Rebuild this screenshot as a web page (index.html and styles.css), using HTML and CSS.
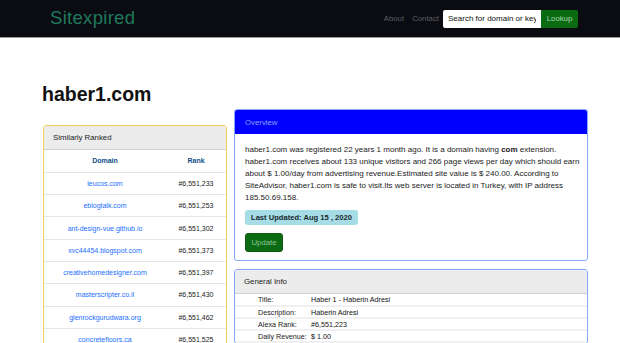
FILE: index.html
```html
<!DOCTYPE html>
<html>
<head>
<meta charset="utf-8">
<link rel="stylesheet" href="styles.css">
</head>
<body>
<nav class="navbar">
  <div class="brand">Sitexpired</div>
  <div class="nav-right">
    <a class="nav-link">About</a>
    <a class="nav-link">Contact</a>
    <form class="search">
      <input class="search-input" type="text" placeholder="Search for domain or keyword">
      <button class="lookup" type="button">Lookup</button>
    </form>
  </div>
</nav>
<main class="container">
  <h1 class="title">haber1.com</h1>
  <div class="row">
    <div class="col-left">
      <div class="card card-yellow">
        <div class="card-header gray">Similarly Ranked</div>
        <table class="rank-table">
          <thead><tr><th>Domain</th><th>Rank</th></tr></thead>
          <tbody>
            <tr><td><a>leucos.com</a></td><td>#6,551,233</td></tr>
            <tr><td><a>eblogtalk.com</a></td><td>#6,551,253</td></tr>
            <tr><td><a>ant-design-vue.github.io</a></td><td>#6,551,302</td></tr>
            <tr><td><a>xvc44454.blogspot.com</a></td><td>#6,551,373</td></tr>
            <tr><td><a>creativehomedesigner.com</a></td><td>#6,551,397</td></tr>
            <tr><td><a>masterscripter.co.il</a></td><td>#6,551,430</td></tr>
            <tr><td><a>glenrockgurudwara.org</a></td><td>#6,551,462</td></tr>
            <tr><td><a>concretefloors.ca</a></td><td>#6,551,525</td></tr>
          </tbody>
        </table>
      </div>
    </div>
    <div class="col-right">
      <div class="card card-blue">
        <div class="card-header blue">Overview</div>
        <div class="card-body">
          <p class="overview">haber1.com was registered 22 years 1 month ago. It is a domain having <b>com</b> extension. haber1.com receives about 133 unique visitors and 266 page views per day which should earn about $ 1.00/day from advertising revenue.Estimated site value is $ 240.00. According to SiteAdvisor, haber1.com is safe to visit.Its web server is located in Turkey, with IP address 185.50.69.158.</p>
          <div><span class="badge">Last Updated: Aug 15 , 2020</span></div>
          <button class="update" type="button">Update</button>
        </div>
      </div>
      <div class="card card-blue info-card">
        <div class="card-header gray">General Info</div>
        <table class="info-table">
          <tr><td class="lbl">Title:</td><td class="val">Haber 1 - Haberin Adresi</td></tr>
          <tr><td class="lbl">Description:</td><td class="val">Haberin Adresi</td></tr>
          <tr class="sep"><td class="lbl">Alexa Rank:</td><td class="val">#6,551,223</td></tr>
          <tr><td class="lbl">Daily Revenue:</td><td class="val">$ 1.00</td></tr>
        </table>
      </div>
    </div>
  </div>
</main>
</body>
</html>
```

FILE: styles.css
```css
* { box-sizing: border-box; }
html, body { margin: 0; padding: 0; }
body {
  font-family: "Liberation Sans", Arial, sans-serif;
  background: #ffffff;
  color: #212529;
  overflow: hidden;
}
.navbar {
  height: 38px;
  background: #0b0c11;
  border-bottom: 1px solid #9a9a9a;
  display: flex;
  align-items: center;
  justify-content: space-between;
  padding: 0 42px 0 50px;
}
.brand {
  color: #1d7a5d;
  font-size: 18.5px;
  letter-spacing: 0.3px;
  margin-top: -1px;
}
.nav-right {
  display: flex;
  align-items: center;
}
.nav-link {
  color: #5b5f66;
  font-size: 7.8px;
  margin-right: 8px;
}
.nav-link + .nav-link { margin-right: 4px; }
.search {
  display: flex;
  margin: 0;
}
.search-input {
  width: 98px;
  height: 18px;
  border: none;
  border-radius: 2px 0 0 2px;
  padding: 0 5px;
  font-family: "Liberation Sans", Arial, sans-serif;
  font-size: 8px;
  outline: none;
}
.search-input::placeholder { color: #111; }
.lookup {
  height: 18px;
  width: 37px;
  border: none;
  background: #0a6b12;
  color: #a9d4ac;
  font-family: "Liberation Sans", Arial, sans-serif;
  font-size: 7.8px;
  padding: 0;
  border-radius: 0 2px 2px 0;
}
.container {
  padding: 0 32px 0 43px;
}
.title {
  margin: 44px 0 0 -1px;
  font-size: 19.5px;
  line-height: 24px;
  font-weight: bold;
  color: #111;
}
.row {
  display: flex;
  align-items: flex-start;
  gap: 7px;
  margin-top: 3px;
}
.col-left {
  width: 184px;
  margin-top: 16px;
}
.col-right {
  width: 354px;
}
.card {
  border-radius: 3px;
  background: #fff;
  overflow: hidden;
}
.card-yellow { border: 1px solid #f7cf5a; }
.card-blue { border: 1px solid #86a9ff; }
.card-header {
  height: 24px;
  display: flex;
  align-items: center;
  padding: 0 9px;
  font-size: 7.8px;
}
.card-header.gray {
  background: #ececec;
  border-bottom: 1px solid #d0d0d0;
  color: #222;
}
.card-header.blue {
  background: #0000ff;
  color: #8fa0ff;
  padding-left: 10px;
}
.rank-table {
  width: 100%;
  border-collapse: collapse;
  font-size: 7px;
}
.rank-table th, .rank-table td {
  height: 22.3px;
  text-align: center;
  border-bottom: 1px solid #e6e6ea;
  padding: 0;
}
.rank-table th {
  color: #0e4f86;
  font-weight: bold;
}
.rank-table th:first-child, .rank-table td:first-child { width: 122px; }
.rank-table td a { color: #1a6eff; }
.rank-table td:last-child { color: #222; }
.card-body {
  padding: 10px 4px 8px 10px;
}
.overview {
  margin: 0;
  font-size: 8px;
  line-height: 12px;
  color: #1a1a1a;
}
.badge {
  display: inline-block;
  margin-top: 6px;
  background: #a6dce6;
  color: #1a2a30;
  font-weight: bold;
  font-size: 7.6px;
  line-height: 15px;
  padding: 0 6px;
  border-radius: 3px;
}
.update {
  display: block;
  margin-top: 8px;
  background: #0a6b12;
  color: #8fc293;
  border: 1px solid #0a5a10;
  border-radius: 3px;
  width: 38px;
  height: 19px;
  font-family: "Liberation Sans", Arial, sans-serif;
  font-size: 7.8px;
  padding: 0;
}
.info-card { margin-top: 8px; }
.info-table {
  width: 100%;
  border-collapse: collapse;
  font-size: 7.2px;
}
.info-table td {
  height: 12px;
  padding: 0;
  border-bottom: 2px solid #f0f0f3;
}
.info-table .lbl { width: 76px; padding-left: 23px; color: #222; }
.info-table .val { color: #111; }
.info-table tr.sep td { border-top: 1px solid #555; }
```
